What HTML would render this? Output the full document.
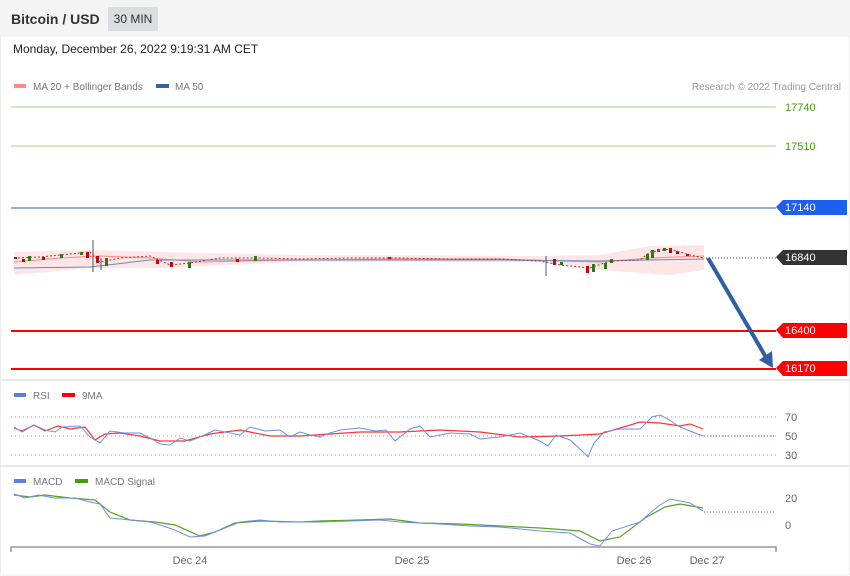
<!DOCTYPE html>
<html><head><meta charset="utf-8"><style>
body{margin:0;width:850px;height:576px;background:#fff;font-family:"Liberation Sans",sans-serif;overflow:hidden;position:relative}
.hdr{position:absolute;left:0;top:0;width:850px;height:36px;background:#f4f4f4}
.t{position:absolute;left:11px;top:11px;font-size:14px;font-weight:bold;color:#333}
.tf{position:absolute;left:108px;top:7px;width:50px;height:24px;background:#dcdde0;font-size:12px;color:#333;line-height:24px;text-align:center}
.d{position:absolute;left:13px;top:42px;font-size:12px;color:#222}
svg{position:absolute;left:0;top:0}
</style></head><body>
<div class="hdr"></div>
<div class="t">Bitcoin / USD</div>
<div class="tf">30 MIN</div>
<div class="d">Monday, December 26, 2022 9:19:31 AM CET</div>
<svg width="850" height="576" font-family="Liberation Sans, sans-serif">
<rect x="0.5" y="36" width="849" height="539" fill="none" stroke="#eee"/>
<line x1="0" y1="380" x2="850" y2="380" stroke="#e8e8e8" stroke-width="2"/>
<line x1="0" y1="466" x2="850" y2="466" stroke="#e8e8e8" stroke-width="2"/>
<rect x="14" y="84" width="12" height="4" fill="#f88"/>
<text x="33" y="90" font-size="10" fill="#777">MA 20 + Bollinger Bands</text>
<rect x="156" y="84" width="13" height="4" fill="#36609e"/>
<text x="175" y="90" font-size="10" fill="#777">MA 50</text>
<text x="841" y="90" font-size="10" fill="#999" text-anchor="end">Research © 2022 Trading Central</text>
<line x1="11" y1="107" x2="776" y2="107" stroke="#a6d07c"/>
<text x="785" y="111" font-size="11" fill="#4a9a10">17740</text>
<line x1="11" y1="146" x2="776" y2="146" stroke="#a6d07c"/>
<text x="785" y="150" font-size="11" fill="#4a9a10">17510</text>
<line x1="11" y1="208" x2="776" y2="208" stroke="#2a5cb8"/>
<polygon points="776,207 783,200 847,200 847,215 783,215" fill="#1d5ff0"/>
<text x="785" y="211" font-size="11" fill="#fff">17140</text>
<line x1="706" y1="258" x2="776" y2="258" stroke="#555" stroke-dasharray="1,2"/>
<polygon points="776,257 783,250 847,250 847,265 783,265" fill="#333"/>
<text x="785" y="261" font-size="11" fill="#fff">16840</text>
<line x1="11" y1="331" x2="776" y2="331" stroke="#f00" stroke-width="2"/>
<polygon points="776,330 783,323 847,323 847,338 783,338" fill="#f00"/>
<text x="785" y="334" font-size="11" fill="#fff">16400</text>
<line x1="11" y1="369" x2="776" y2="369" stroke="#f00" stroke-width="2"/>
<polygon points="776,368 783,361 847,361 847,376 783,376" fill="#f00"/>
<text x="785" y="372" font-size="11" fill="#fff">16170</text>
<!-- bollinger -->
<path d="M14,252 L90,250 L160,252 L300,255 L540,256 L600,255 L650,246 L704,245 L704,270 L670,275 L600,270 L540,262 L300,262 L160,268 L90,268 L14,275Z" fill="#fde0e0" opacity=".8"/>
<polyline points="14,262 60,258 100,256 150,258 200,262 300,260 400,259 500,259 560,261 600,262 650,258 704,256" fill="none" stroke="#f88"/>
<polyline points="14,268 90,267 150,260 300,260 500,260 600,261 650,260 704,259" fill="none" stroke="#6a88c0"/>
<!-- candles -->
<g stroke="#555" stroke-width="1">
<line x1="93" y1="240" x2="93" y2="272"/><line x1="546" y1="256" x2="546" y2="276"/><line x1="101" y1="258" x2="101" y2="270"/>
</g>
<g fill="#c00">
<rect x="14" y="257" width="3" height="2"/><rect x="22" y="259" width="3" height="3"/><rect x="42" y="257" width="3" height="3"/><rect x="86" y="252" width="3" height="6"/><rect x="96" y="256" width="3" height="7"/><rect x="156" y="260" width="3" height="4"/><rect x="170" y="262" width="3" height="5"/><rect x="236" y="259" width="3" height="3"/><rect x="388" y="257" width="3" height="2"/><rect x="553" y="259" width="3" height="6"/><rect x="586" y="266" width="3" height="7"/><rect x="669" y="248" width="3" height="5"/><rect x="676" y="251" width="3" height="3"/><rect x="686" y="254" width="3" height="2"/>
</g>
<g fill="#2a7a1a">
<rect x="28" y="256" width="3" height="5"/><rect x="60" y="254" width="3" height="4"/><rect x="80" y="252" width="3" height="3"/><rect x="105" y="258" width="3" height="8"/><rect x="188" y="262" width="3" height="6"/><rect x="254" y="256" width="3" height="5"/><rect x="560" y="262" width="3" height="3"/><rect x="592" y="264" width="3" height="8"/><rect x="604" y="263" width="3" height="6"/><rect x="610" y="259" width="3" height="4"/><rect x="646" y="254" width="3" height="6"/><rect x="651" y="250" width="3" height="8"/><rect x="657" y="249" width="3" height="3"/><rect x="663" y="248" width="3" height="3"/>
</g>
<polyline points="14,258 40,257 70,254 90,252 100,262 120,258 150,256 170,265 190,263 220,258 260,258 300,259 350,258 400,258 450,259 500,259 540,261 560,265 590,268 610,261 640,260 650,252 670,249 690,255 704,258" fill="none" stroke="#a33" stroke-width="1" stroke-dasharray="2,2"/>
<!-- arrow -->
<line x1="708" y1="258" x2="767" y2="359" stroke="#2f5f9e" stroke-width="4"/>
<polygon points="759,360 773,368 772,351" fill="#2f5f9e"/>
<!-- RSI -->
<rect x="14" y="393" width="12" height="4" fill="#5b80e0"/><text x="33" y="399" font-size="10" fill="#777">RSI</text>
<rect x="62" y="393" width="13" height="4" fill="#f00"/><text x="82" y="399" font-size="10" fill="#777">9MA</text>
<g stroke="#aaa" stroke-dasharray="1,3"><line x1="11" y1="417" x2="776" y2="417"/><line x1="11" y1="436" x2="776" y2="436"/><line x1="11" y1="455" x2="776" y2="455"/></g>
<line x1="704" y1="436" x2="776" y2="436" stroke="#3355bb" stroke-dasharray="1,2"/>
<text x="785" y="421" font-size="11" fill="#666">70</text><text x="785" y="440" font-size="11" fill="#666">50</text><text x="785" y="459" font-size="11" fill="#666">30</text>
<polyline points="14,428 22,431 34,425 45,431 58,426 70,429 85,427 95,440 105,434 120,433 140,436 160,441 185,441 210,434 240,430 270,436 300,436 330,434 360,432 400,432 440,430 480,432 520,437 560,436 600,434 640,422 660,423 680,426 690,424 703,429" fill="none" stroke="#f33" stroke-width="1.2"/>
<polyline points="14,427 22,432 34,425 45,430 55,432 62,427 80,426 90,437 100,443 110,431 125,433 140,433 150,438 160,444 170,445 180,438 190,441 200,437 215,430 240,435 250,427 265,431 280,430 290,437 300,432 310,435 320,437 330,433 340,430 360,428 375,431 386,430 395,441 410,429 420,426 430,437 440,435 450,433 470,434 480,439 500,437 520,433 540,441 548,446 556,435 570,440 580,449 588,457 594,443 604,432 620,429 640,429 652,417 660,415 668,419 680,427 690,431 703,436" fill="none" stroke="#6e8fe8" stroke-width="1"/>
<!-- MACD -->
<rect x="14" y="479" width="12" height="4" fill="#5b80e0"/><text x="33" y="485" font-size="10" fill="#777">MACD</text>
<rect x="75" y="479" width="13" height="4" fill="#4a9a10"/><text x="95" y="485" font-size="10" fill="#777">MACD Signal</text>
<line x1="704" y1="512" x2="776" y2="512" stroke="#3355bb" stroke-dasharray="1,2"/>
<text x="785" y="502" font-size="11" fill="#666">20</text><text x="785" y="529" font-size="11" fill="#666">0</text>
<polyline points="14,495 30,497 45,495 70,498 95,500 110,512 130,520 155,522 175,525 200,536 215,532 235,523 260,521 300,522 320,521 360,520 390,519 420,523 460,524 500,526 540,528 580,531 600,541 620,537 645,518 665,507 680,504 703,508" fill="none" stroke="#5aa020" stroke-width="1.2"/>
<polyline points="14,494 25,498 38,495 55,498 75,498 90,502 100,504 110,518 130,520 150,522 160,525 175,530 190,537 205,536 225,528 240,522 260,520 280,522 320,522 350,521 380,520 400,522 440,524 470,526 500,527 540,531 570,533 590,544 600,546 612,531 640,522 650,513 660,505 670,499 690,503 703,511" fill="none" stroke="#6e8fe8" stroke-width="1"/>
<!-- axis -->
<path d="M11,552 V547 H776 V552" fill="none" stroke="#999" stroke-width="1.5"/>
<g font-size="11" fill="#666" text-anchor="middle"><text x="190" y="564">Dec 24</text><text x="412" y="564">Dec 25</text><text x="634" y="564">Dec 26</text><text x="707" y="564">Dec 27</text></g>
</svg>
</body></html>
